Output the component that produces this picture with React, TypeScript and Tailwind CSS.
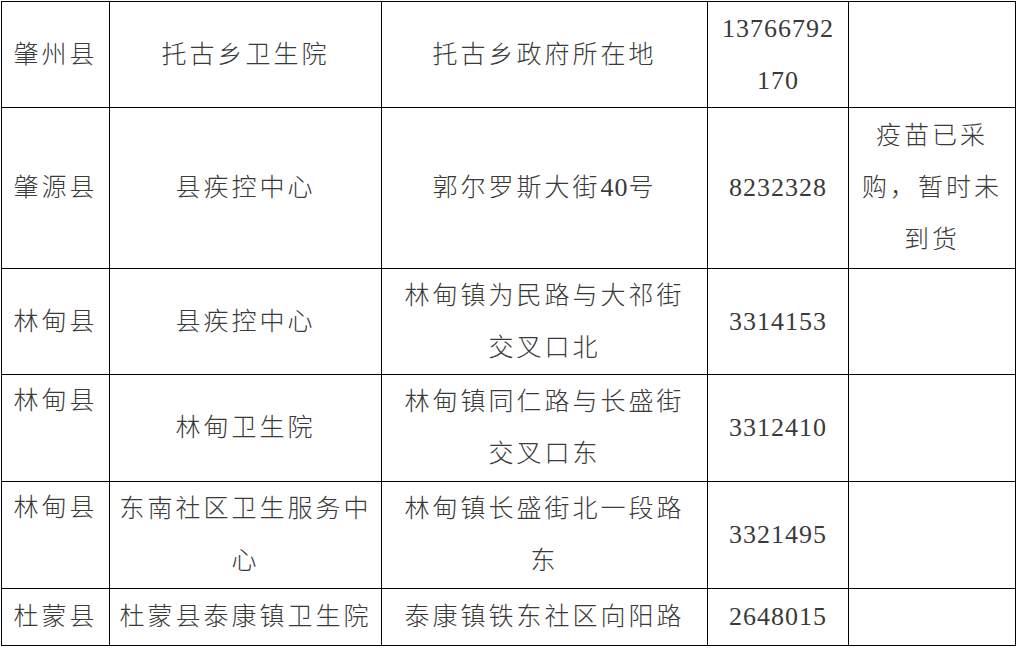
import type { ReactNode } from 'react';

type Cell = { text: ReactNode; top?: boolean };

interface Row {
  height: string;
  cells: Cell[];
}

const num = (s: string) => <span className="text-[26px] tracking-[1px] break-all">{s}</span>;

const rows: Row[] = [
  {
    height: 'h-[106px]',
    cells: [
      { text: '肇州县' },
      { text: '托古乡卫生院' },
      { text: '托古乡政府所在地' },
      { text: num('13766792170') },
      { text: '' },
    ],
  },
  {
    height: 'h-[161px]',
    cells: [
      { text: '肇源县' },
      { text: '县疾控中心' },
      { text: <>郭尔罗斯大街{num('40')}号</> },
      { text: num('8232328') },
      { text: '疫苗已采购，暂时未到货' },
    ],
  },
  {
    height: 'h-[106px]',
    cells: [
      { text: '林甸县' },
      { text: '县疾控中心' },
      { text: '林甸镇为民路与大祁街交叉口北' },
      { text: num('3314153') },
      { text: '' },
    ],
  },
  {
    height: 'h-[107px]',
    cells: [
      { text: '林甸县', top: true },
      { text: '林甸卫生院' },
      { text: '林甸镇同仁路与长盛街交叉口东' },
      { text: num('3312410') },
      { text: '' },
    ],
  },
  {
    height: 'h-[107px]',
    cells: [
      { text: '林甸县', top: true },
      { text: '东南社区卫生服务中心' },
      { text: '林甸镇长盛街北一段路东' },
      { text: num('3321495') },
      { text: '' },
    ],
  },
  {
    height: 'h-[57px]',
    cells: [
      { text: '杜蒙县' },
      { text: '杜蒙县泰康镇卫生院' },
      { text: '泰康镇铁东社区向阳路' },
      { text: num('2648015') },
      { text: '' },
    ],
  },
];

// horizontal padding per column, tuned so lines wrap where the source wraps
const pad = ['px-1', 'px-1', 'px-3', 'px-[10px]', 'px-2'];

export default function App() {
  return (
    <div className="min-h-screen bg-white pl-px pt-px">
      <table
        className="table-fixed border-collapse text-[#3a3a3a] font-light text-[25px] tracking-[3px] leading-[52px] text-center"
        style={{ fontFamily: '"Liberation Serif", "Noto Sans CJK SC", serif', width: 1015 }}
      >
        <colgroup>
          <col className="w-[108px]" />
          <col className="w-[272px]" />
          <col className="w-[326px]" />
          <col className="w-[141px]" />
          <col className="w-[167px]" />
        </colgroup>
        <tbody>
          {rows.map((row, i) => (
            <tr key={i} className={row.height}>
              {row.cells.map((c, j) => (
                <td
                  key={j}
                  className={`border-[1.5px] border-black py-0 ${pad[j]} ${c.top ? 'align-top' : 'align-middle'}`}
                >
                  {c.text}
                </td>
              ))}
            </tr>
          ))}
        </tbody>
      </table>
    </div>
  );
}
